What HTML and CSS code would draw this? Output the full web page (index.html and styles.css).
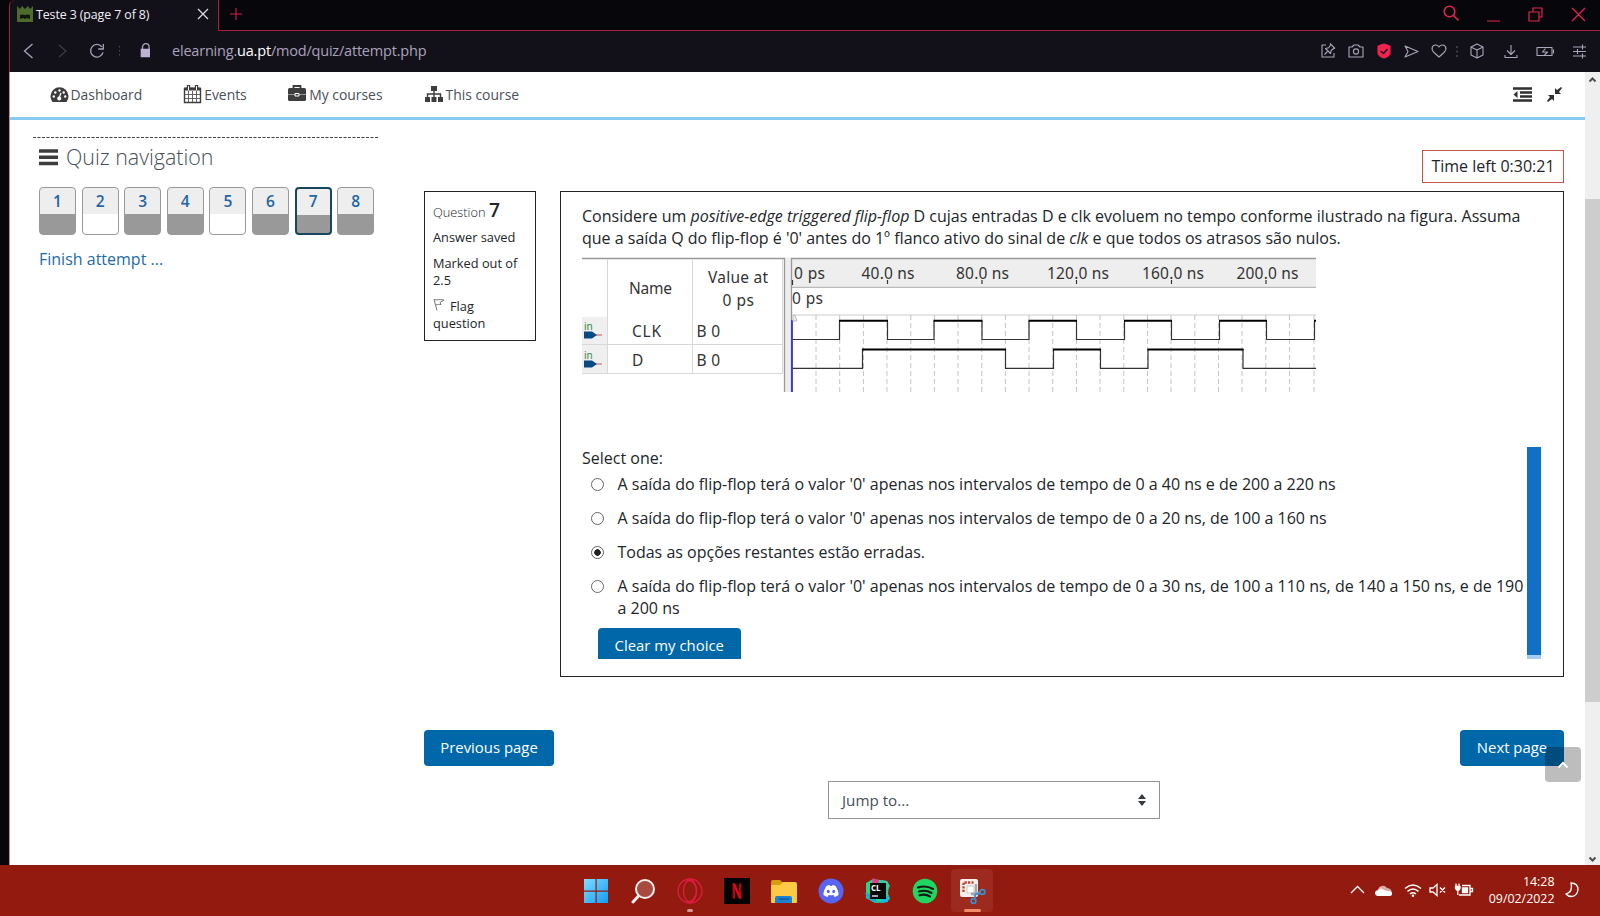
FILE: index.html
```html
<!DOCTYPE html>
<html lang="en">
<head>
<meta charset="utf-8">
<title>Teste 3 (page 7 of 8)</title>
<link rel="stylesheet" href="styles.css">
</head>
<body>
<div class="browser">
  <div class="tabstrip">
    <div class="tab">
      <svg class="favicon" width="18" height="18" viewBox="0 0 18 18"><path d="M1 1l3 3 2-3 3 3 3-3 2 3 3-3v16H1z" fill="#4c6b2c"/><path d="M4 10q2-1 5 0 3-1 5 0v4l-3-1-2 1-2-1-3 1z" fill="#11150c"/></svg>
      <span class="tab-title">Teste 3 (page 7 of 8)</span>
      <svg class="tab-close" width="12" height="12" viewBox="0 0 12 12"><path d="M1 1l10 10M11 1L1 11" stroke="#e0dde6" stroke-width="1.2"/></svg>
    </div>
    <div class="strip-rest">
      <svg width="14" height="14" viewBox="0 0 14 14"><path d="M7 1v12M1 7h12" stroke="#d11f47" stroke-width="1.1"/></svg>
      <svg class="win-controls" width="146" height="20" viewBox="0 0 146 20" fill="none" stroke="#e2264f" stroke-width="1.2"><circle cx="7.500" cy="7.500" r="5.3" stroke-width="1.6"/><path d="M11.500 11.500l5 5" stroke-width="1.6"/><path d="M45 17h13M87 8h10v9h-10zM91 8V4h9v9h-3M130 4l13 13M143 4l-13 13"/></svg>
    </div>
  </div>
  <div class="toolbar">
    <svg width="140" height="22" viewBox="0 0 140 22" fill="none" stroke="#aaa3bb" stroke-width="1.3"><path d="M22.500 4l-8 7 8 7"/><path d="M49 5l7 6-7 6" stroke="#3d3948"/><path d="M91.800 6.800a6.300 6.300 0 1 0 1.200 5.500M93.300 4v5h-5" /><path d="M109.500 6v12" stroke="#4b4658" stroke-width="1" stroke-dasharray="1.5 2.5"/><path d="M132.500 10V7a3.300 3.300 0 0 1 6.600 0v3" /><path d="M131.300 9.500h9v7h-9z" fill="#beb2d5" stroke="#beb2d5"/></svg>
    <span class="url">elearning.<b>ua.pt</b>/mod/quiz/attempt.php</span>
    <svg class="tool-icons" width="266" height="20" viewBox="0 0 266 20" fill="none" stroke="#aaa5b8" stroke-width="1.1" stroke-linejoin="round"><path d="M5 4H1v12h12v-4M3.500 13.500l3.500-3.500M4.500 7.500l5 5 .8-3.200 3.200-2.300-3.500-3.500-2.300 3.200zM9 2.500l5 5"/><path d="M28 6h3l2-2h4l2 2h3v10H28z"/><circle cx="35" cy="10.500" r="2.600"/><path d="M63 3l6 2v7c0 2-3 4-6 5-3-1-6-3-6-5V5z" fill="#f5234f" stroke="#f5234f"/><path d="M59.500 10l3 2.500 4-4.500" stroke="#191522" stroke-width="1.500"/><path d="M84 5l13 5.500-13 5.500 3-5.500z"/><path d="M118 16l-5-4.500c-4-4-1-8 2-7.500 2 .3 3 2 3 2s1-1.700 3-2c3-.5 6 3.500 2 7.500z"/><path d="M136 5v12" stroke-dasharray="2 2.500" stroke="#625c72"/><path d="M150 6l6-3 6 3v8l-6 3-6-3zM150 6l6 3 6-3M156 9v8"/><path d="M190 4v9M186 9.500l4 4 4-4M184 14v2.500h12V14"/><path d="M216 6.500h15v8h-15zM232.500 8.500v4M224.500 7.500l-3 3.500h5l-3 3"/><path d="M252 6h13M252 10.500h13M252 15h13M261.500 3.500v5M256.500 8v5M261.500 12.500v5"/></svg>
  </div>
  <div class="viewport">
    <div class="page">
      <div class="navbar">
        <div class="nav-item n1"><svg width="19" height="17" viewBox="0 0 19 17"><path d="M2.500 16a9 9 0 1 1 14 0z" fill="#3d3d3d"/><g fill="#fff"><circle cx="3.800" cy="10.500" r="1.200"/><circle cx="5.300" cy="6.500" r="1.200"/><circle cx="9.500" cy="4.500" r="1.200"/><circle cx="13.700" cy="6.500" r="1.200"/><circle cx="15.200" cy="10.500" r="1.200"/></g><path d="M9 12l2-5" stroke="#fff" stroke-width="1.300"/><circle cx="9.200" cy="12.500" r="2" fill="#fff"/></svg>Dashboard</div>
        <div class="nav-item n2"><svg width="19" height="20" viewBox="0 0 19 20"><path d="M1.500 4.500h16v14h-16z" fill="#fff" stroke="#3d3d3d" stroke-width="1.400"/><path d="M1.500 5h16" stroke="#3d3d3d" stroke-width="3"/><path d="M5.500 7v11M9.500 7v11M13.500 7v11M2 10.500h15M2 14.500h15" stroke="#555" stroke-width=".9"/><path d="M5.500 1v5M13.500 1v5" stroke="#3d3d3d" stroke-width="3.400"/><path d="M5.500 2v4M13.500 2v4" stroke="#fff"/></svg>Events</div>
        <div class="nav-item n3"><svg width="20" height="20" viewBox="0 0 20 20"><path d="M6.500 5V2h7v3" fill="none" stroke="#3d3d3d" stroke-width="1.800"/><rect x="1" y="4" width="18" height="13" rx="1.500" fill="#3d3d3d"/><path d="M1 10.500h18" stroke="#bbb" stroke-width=".7"/><path d="M8 9.500h4v2.500H8z" fill="#3d3d3d" stroke="#fff"/></svg>My courses</div>
        <div class="nav-item n4"><svg width="20" height="17" viewBox="0 0 20 17" fill="#3d3d3d"><path d="M7 0h6v5H7zM1 11h5v5H1zM7.500 11h5v5h-5zM14 11h5v5h-5z"/><path d="M10 5v6M3.500 11V8h13v3" fill="none" stroke="#3d3d3d" stroke-width="1.400"/></svg>This course</div>
        <svg class="nav-tools" width="50" height="18" viewBox="0 0 50 18" fill="#2f2f2f"><path d="M0 1.200h19v2.500H0zM7 5.200h12v2.500H7zM7 9.200h12v2.500H7zM0 13.200h19v2.500H0zM4.500 5v7L.5 8.500z"/><path d="M42 8V2l2 2 4-3 1 1-3 4 2 2zM41 9v6l-2-2-4 3-1-1 3-4-2-2z"/></svg>
      </div>
      <div class="columns">
        <aside class="side">
          <svg class="dash" width="346" height="2"><path d="M0 1.500h346" stroke="#444" stroke-dasharray="3 1.500"/></svg>
          <h2 class="side-title"><svg width="19" height="17" viewBox="0 0 19 17"><path d="M0 2h19M0 8.300h19M0 14.600h19" stroke="#3d3d3d" stroke-width="3.500"/></svg>Quiz navigation</h2>
          <div class="qnav">
            <a class="q done">1</a><a class="q">2</a><a class="q done">3</a><a class="q done">4</a><a class="q">5</a><a class="q done">6</a><a class="q done current">7</a><a class="q done">8</a>
          </div>
          <a class="finish">Finish attempt ...</a>
        </aside>
        <main class="main">
          <div class="timer">Time left 0:30:21</div>
          <div class="question">
            <div class="info">
              <div class="qno">Question <b>7</b></div>
              <div class="state">Answer saved</div>
              <div class="grade">Marked out of 2.5</div>
              <div class="flag"><svg width="12" height="13" viewBox="0 0 12 13" fill="none" stroke="#777"><path d="M1 1.500l3 11M1 1.500c3 1 5-.5 10 .5L7 4.500l1 2c-2 0-3-.5-5 .5"/></svg>Flag question</div>
            </div>
            <div class="content">
              <p class="stem">Considere um <i>positive-edge triggered flip-flop</i> D cujas entradas D e clk evoluem no tempo conforme ilustrado na figura. Assuma<br>que a saída Q do flip-flop é '0' antes do 1º flanco ativo do sinal de <i>clk</i> e que todos os atrasos são nulos.</p>
              <svg class="wave" width="734" height="135" viewBox="581 257 734 135">
                <path d="M581 317h25v56.500h-25z" fill="#efefef"/>
                <path d="M783 257.500h8V392h-8z" fill="#ededf0"/>
                <path d="M791 259h524v28H791z" fill="#eee"/>
                <path d="M581 258.500h203M790 258.500h525" stroke="#999" stroke-width="1.500"/>
                <path d="M606.500 259v114M691.500 259v114M781.500 259v114M581 344.500h201M581 373.500h201" stroke="#d8d8d8" fill="none"/>
                <path d="M783.500 258v134M790.500 258v134" stroke="#999" stroke-width="1.300"/>
                <path d="M791 287.300h524" stroke="#aaa"/><path d="M791 315h524" stroke="#ccc"/>
                <path class="grid" d="M815 315v77M838.700 315v77M862.400 315v77M886 315v77M909.800 315v77M933.400 315v77M957 315v77M980.800 315v77M1004.400 315v77M1028 315v77M1051.800 315v77M1075.500 315v77M1099 315v77M1122.800 315v77M1146.500 315v77M1170 315v77M1193.800 315v77M1217.500 315v77M1241 315v77M1264.800 315v77M1288.500 315v77M1313 315v77"/>
                <path d="M791.500 280v5M886.500 280v4M981 280v4M1075.500 280v4M1170.500 280v4M1265 280v4" stroke="#333" stroke-width="1.200"/>
                <path d="M791 339.500h47.500V321M886.500 321v18.500h46.500V321M981 321v18.500h47V321M1075.500 321v18.500h48V321M1170.500 321v18.500h48V321M1265.500 321v18.500h48V321M791 368.300h70.500V349M1004.500 349v19.300h48V349M1099.500 349v19.300h47.500V349M1242 349v19.300h73" stroke="#333" stroke-width="1.200" fill="none"/>
                <path d="M838 320.800h49M932.500 320.800h49M1027.500 320.800h48.500M1123 320.800h48M1218 320.800h48M1313 320.800h2M861 349.500h144M1052 349.500h48M1146.500 349.500h96" stroke="#000" stroke-width="2"/>
                <path d="M791 320v72" stroke="#3636c4" stroke-width="1.800"/><path d="M792 315h2l2 6h-4z" stroke="#bbb" fill="#eee"/>
                <g class="port"><path d="M583 331.500h8l5 3.500-5 3.500h-8zM583 360.500h8l5 3.500-5 3.500h-8z" fill="#074b85"/><path d="M595 335h6M595 364h6" stroke="#c55"/><text x="583" y="330">in</text><text x="583" y="359">in</text></g>
                <g class="lbl"><text x="628" y="294" textLength="43">Name</text><text x="707" y="283" textLength="60">Value at</text><text x="721.500" y="305.500" textLength="31.500">0 ps</text><text x="631" y="337" textLength="29">CLK</text><text x="631" y="366">D</text><text x="695.500" y="337" textLength="23.500">B 0</text><text x="695.500" y="366" textLength="23.500">B 0</text>
                <text x="793" y="279.300" textLength="31">0 ps</text><text x="860.500" y="279.300" textLength="53">40.0 ns</text><text x="955" y="279.300" textLength="53">80.0 ns</text><text x="1046" y="279.300" textLength="62">120.0 ns</text><text x="1141" y="279.300" textLength="62">160.0 ns</text><text x="1235.500" y="279.300" textLength="62">200.0 ns</text><text x="791" y="303.500" textLength="31">0 ps</text></g>
              </svg>
              <div class="answers">
                <div class="choices">
                  <div class="prompt">Select one:</div>
                  <div class="opt"><span class="radio"></span><span>A saída do flip-flop terá o valor '0' apenas nos intervalos de tempo de 0 a 40 ns e de 200 a 220 ns</span></div>
                  <div class="opt"><span class="radio"></span><span>A saída do flip-flop terá o valor '0' apenas nos intervalos de tempo de 0 a 20 ns, de 100 a 160 ns</span></div>
                  <div class="opt"><span class="radio on"></span><span>Todas as opções restantes estão erradas.</span></div>
                  <div class="opt"><span class="radio"></span><span>A saída do flip-flop terá o valor '0' apenas nos intervalos de tempo de 0 a 30 ns, de 100 a 110 ns, de 140 a 150 ns, e de 190<br>a 200 ns</span></div>
                  <div class="clear">Clear my choice</div>
                </div>
                <div class="bluebar"></div>
              </div>
            </div>
          </div>
          <div class="pager"><a class="btn">Previous page</a><a class="btn next">Next page</a></div>
          <div class="jump"><span>Jump to...</span><svg width="8" height="12" viewBox="0 0 8 12"><path d="M4 0l4 5H0zM4 12L0 7h8z" fill="#343a40"/></svg></div>
        </main>
      </div>
      <div class="totop"><svg width="12" height="8" viewBox="0 0 12 8"><path d="M1.500 6.500L6 2l4.500 4.500" fill="none" stroke="#fff" stroke-width="2"/></svg></div>
    </div>
    <div class="scrollbar">
      <svg width="7" height="6" viewBox="0 0 7 6"><path d="M.5 4.500l3-3 3 3" fill="none" stroke="#505050" stroke-width="2"/></svg>
      <div class="thumb"></div>
      <svg width="7" height="6" viewBox="0 0 7 6"><path d="M.5 1.500l3 3 3-3" fill="none" stroke="#505050" stroke-width="2"/></svg>
    </div>
  </div>
</div>
<div class="taskbar">
  <div class="apps">
    <div class="app"><svg width="26" height="26" viewBox="0 0 26 26"><defs><linearGradient id="w" x1="0" y1="0" x2="1" y2="1"><stop offset="0" stop-color="#7fdcff"/><stop offset="1" stop-color="#129cf5"/></linearGradient></defs><path d="M1 1h11.500v11.500H1zM13.700 1H25v11.500H13.700zM1 13.700h11.500V25H1zM13.700 13.700H25V25H13.700z" fill="url(#w)"/></svg></div>
    <div class="app"><svg width="26" height="26" viewBox="0 0 26 26"><circle cx="15" cy="11" r="9" fill="#a94a41" stroke="#f5eeee" stroke-width="2"/><path d="M8.500 18L3 24" stroke="#eee" stroke-width="3" stroke-linecap="round"/></svg></div>
    <div class="app"><svg width="26" height="26" viewBox="0 0 26 26" fill="none" stroke="#e01c40" stroke-width="1.300"><circle cx="13" cy="13" r="12"/><ellipse cx="13" cy="13" rx="6.500" ry="11"/><path d="M10 3c5-2 9.500 4 9.500 10s-4.500 12-9.500 10"/></svg><i class="dot"></i></div>
    <div class="app"><svg width="26" height="26" viewBox="0 0 26 26"><path d="M0 0h26v26H0z" fill="#050203"/><path d="M9.800 5.500v15M16.200 5.500v15" stroke="#b1060f" stroke-width="2.400"/><path d="M8.600 5.500h2.600l6.200 15h-2.600z" fill="#e50914"/></svg></div>
    <div class="app"><svg width="28" height="26" viewBox="0 0 28 26"><path d="M1 4q0-2 2-2h7l3 3h11v8H1z" fill="#d99a14"/><path d="M1 7h9l3-3h12q2 0 2 2v18q0 1-1 1H2q-1 0-1-1z" fill="#fdca43"/><path d="M5 25v-5q0-2 2-2h13q2 0 2 2v5z" fill="#1e82d2"/><path d="M9 21h10" stroke="#115b9b" stroke-width="1.500"/></svg></div>
    <div class="app"><svg width="26" height="26" viewBox="0 0 26 26"><circle cx="13" cy="13" r="12.500" fill="#5865f2"/><path d="M8.500 8q2-1 3-1l.6 1h1.800l.6-1q1 0 3 1 3.300 5 3 9-2 1.500-4 2l-1-2q-2.500.6-5 0l-1 2q-2-.5-4-2-.3-4 3-9z" fill="#fff"/><ellipse cx="10.300" cy="13.500" rx="1.500" ry="1.700" fill="#5865f2"/><ellipse cx="15.700" cy="13.500" rx="1.500" ry="1.700" fill="#5865f2"/></svg></div>
    <div class="app"><svg width="28" height="28" viewBox="0 0 28 28"><path d="M2 6l7-4 14 2 2 4-2 17-12 1-9-5z" fill="#21d789"/><path d="M9 1l7 3-3 5-5-2z" fill="#ed358c"/><path d="M15 3l8 1 3 5-3 5 3 8-7 4-6-7z" fill="#35cf9c"/><path d="M1 16l8 2 5 8-10-4z" fill="#13a9dd"/><path d="M18 20l7-1-1 6-8 1z" fill="#13b9e0"/><path d="M6 6h16v16H6z" fill="#090909"/><text x="7" y="14" class="clion">CL</text><path d="M8 19h6" stroke="#fff" stroke-width="1.300"/></svg></div>
    <div class="app"><svg width="26" height="26" viewBox="0 0 26 26"><circle cx="13" cy="13" r="12.300" fill="#1ed760"/><path d="M6 9.500q8-2.500 15 1.500M7 13.500q7-2 12.500 1.500M7.500 17.200q6-1.500 10.500 1.300" fill="none" stroke="#161616" stroke-width="2.100" stroke-linecap="round"/></svg></div>
    <div class="app active"><svg width="28" height="28" viewBox="0 0 28 28"><rect x="2" y="2" width="18" height="18" rx="2" fill="#f5eeec"/><path d="M5.500 15V5.500h10" fill="none" stroke="#b5492f" stroke-width="2.300" stroke-dasharray="2.300 1.200"/><path d="M9 9h7v7H9z" fill="#fff" stroke="#c9c9cb"/><path d="M18 7v9l-2 3M13 17l9-1" stroke="#a0a6af" stroke-width="2.300" fill="none"/><circle cx="24.500" cy="15" r="2.400" fill="none" stroke="#3a8fd0" stroke-width="1.600"/><circle cx="15.500" cy="24" r="2.400" fill="none" stroke="#3a8fd0" stroke-width="1.600"/><path d="M16.500 22l1-4.500 5-1.500" fill="none" stroke="#3a8fd0" stroke-width="1.600"/></svg><i class="dot wide"></i></div>
  </div>
  <div class="tray">
    <svg width="126" height="20" viewBox="0 0 126 20" fill="none" stroke="#fff" stroke-width="1.300"><path d="M1 13l6.500-6.500L14 13"/><path d="M28 10a5 5 0 0 1 9-2q5 0 5 6l-14-4z" fill="#dfaaa5" stroke="none"/><path d="M28 16q-3-.5-3-3t3-3q1.500-2 4-1l5 2q5-.5 5 3 0 2-2 2z" fill="#fff" stroke="none"/><path d="M55 8.500q8-7 16 0M57.500 11.300q5.500-4.600 11 0M60 14q3-2.500 6 0" stroke-width="1.500"/><circle cx="63" cy="15.800" r="1.300" fill="#fff" stroke="none"/><path d="M80 8h3l4-3.500v11L83 12h-3zM90 7.500l5 5M95 7.500l-5 5"/><path d="M112 5.500h8v9.500h-11M120.500 8.500h2v3h-2"/><path d="M112.500 8h5v4.500h-5z" fill="#fff"/><path d="M106 3.500v3M109 3.500v3M105.500 6.500h4.500v2l-1.200 1.500h-2l-1.300-1.500zM107.800 10v5" fill="#fff"/></svg>
    <div class="clock">14:28<br>09/02/2022</div>
    <svg width="14" height="16" viewBox="0 0 14 16"><path d="M6 1q7 0 7 7-1 6-6.500 6.500Q3 14.500 1 12q7-2 5-11z" fill="none" stroke="#fff" stroke-width="1.300"/></svg>
  </div>
</div>
</body>
</html>
```
FILE: styles.css
```css
* { box-sizing: border-box; }
body { margin: 0; width: 1600px; height: 916px; overflow: hidden; background: #07070b; font-family: "Open Sans", "Noto Sans", sans-serif; font-size: 16px; color: #212529; display: flex; flex-direction: column; }
svg { display: block; flex: none; }
.browser { height: 865px; padding-left: 9px; display: flex; flex-direction: column; background: #07070b; }
.tabstrip { height: 31px; display: flex; flex: none; }
.tab { width: 210px; background: #12111a; border-left: 1px solid #a71f3e; border-right: 1px solid #a71f3e; border-top-left-radius: 6px; display: flex; align-items: center; padding: 0 9px 3px 6px; }
.tab-title { font-size: 12.400px; letter-spacing: -.1px; color: #f2eff7; margin-left: 2px; flex: 1; white-space: nowrap; }
.strip-rest { flex: 1; border-bottom: 1px solid #a71f3e; display: flex; align-items: center; padding: 0 12px 3px 10px; justify-content: space-between; }
.toolbar { height: 41px; flex: none; background: #12111a; border-left: 1px solid #a71f3e; display: flex; align-items: center; padding-bottom: 2px; }
.url { margin-left: 22px; font-size: 14.500px; color: #aaa3bb; flex: 1; letter-spacing: -.2px; }
.url b { font-weight: 400; color: #fff; }
.tool-icons { margin-right: 13.500px; }
.viewport { flex: 1; min-height: 0; display: flex; }
.page { flex: 1; background: #fff; border-left: 1px solid #d8859a; position: relative; display: flex; flex-direction: column; }
.navbar { height: 48px; flex: none; border-bottom: 3px solid #86caf4; display: flex; align-items: center; padding-left: 39.500px; font-size: 13.900px; color: #495057; }
.nav-item { display: flex; align-items: center; height: 44px; padding-bottom: 1px; }
.nav-item svg { margin-right: 2px; }
.n2 { margin-left: 41px; } .n3 { margin-left: 40.500px; } .n4 { margin-left: 41px; }
.nav-tools { margin-left: auto; margin-right: 22px; }
.columns { display: flex; padding-left: 23px; flex: 1; }
.side { width: 391px; padding-top: 16px; flex: none; }
.side-title { margin: 3px 0 0 5.500px; font-size: 21.400px; line-height: 32px; font-weight: 300; color: #495057; display: flex; align-items: center; gap: 8.500px; }
.qnav { display: flex; gap: 5.600px; margin: 14px 0 0 6px; }
.q { width: 37px; height: 48px; border: 1px solid #999; border-radius: 4px; text-align: center; font-weight: 600; font-size: 15.500px; line-height: 26px; color: #1f65a3; background: linear-gradient(#eee 26px, #fff 26px); }
.q.done { background: linear-gradient(#eee 26px, #999 26px); }
.q.current { border: 2px solid #17475f; line-height: 24px; }
.finish { display: block; margin: 13px 0 0 6px; line-height: 22px; color: #1e6ba8; }
.main { width: 1140px; padding-top: 30px; display: flex; flex-direction: column; }
.timer { align-self: flex-end; width: 142px; height: 33px; border: 1px solid #c9544e; line-height: 31px; text-align: center; }
.question { margin-top: 8px; display: flex; justify-content: space-between; align-items: flex-start; }
.info { width: 112px; height: 150px; border: 1px solid #222; padding: 5px 8px; font-size: 12.800px; line-height: 17px; }
.qno { font-weight: 300; line-height: 26px; }
.qno b { font-size: 19.200px; font-weight: 600; }
.state { margin-top: 4px; } .grade { margin-top: 9px; } .flag { margin-top: 9px; }
.flag svg { display: inline-block; margin-right: 5px; }
.content { width: 1004px; height: 486px; border: 1px solid #222; padding: 13px 21px 0 21px; line-height: 22px; }
.stem { margin: 0; white-space: nowrap; }
.wave { margin-top: 8px; }
.wave text { font-family: "Noto Sans", sans-serif; }
.lbl { font-size: 15.500px; fill: #333; }
.port { font-size: 10px; fill: #348a42; }
.grid { stroke: #c4c4c4; stroke-dasharray: 5 3; }
.answers { margin-top: 54px; height: 213px; display: flex; overflow: hidden; position: relative; }
.choices { width: 945px; white-space: nowrap; padding-top: 1px; }
.prompt { line-height: 22px; }
.opt { display: flex; align-items: flex-start; gap: 13.500px; padding-left: 9px; margin-bottom: 12px; }
.prompt + .opt { margin-top: 4px; }
.radio { width: 13px; height: 13px; margin-top: 4.500px; border: 1px solid #666; border-radius: 50%; flex: none; }
.radio.on { background: radial-gradient(circle, #222 0 3px, #fff 3.500px); }
.clear { margin: -3px 0 0 16px; width: 142.500px; height: 36px; background: #0067a9; color: #fff; border-radius: 4px; line-height: 34px; text-align: center; font-size: 14.900px; }
.bluebar { width: 14px; margin-top: 1px; background: #126fc6; border-bottom: 4px solid #a5cdf3; flex: none; }
.pager { display: flex; justify-content: space-between; margin-top: 53px; }
.btn { width: 130px; height: 36px; border-radius: 4px; background: #0067a9; color: #fff; line-height: 35px; text-align: center; font-size: 14.900px; }
.btn.next { width: 104px; }
.jump { margin: 15px 0 0 404px; width: 332px; height: 38px; border: 1px solid #8f959b; padding: 0 13px 0 13px; display: flex; justify-content: space-between; align-items: center; color: #495057; font-size: 15.200px; }
.jump span { padding-bottom: 1px; }
.totop { position: absolute; right: 4px; bottom: 83px; width: 36px; height: 35px; border-radius: 4px; background: rgba(0,0,0,.26); display: flex; align-items: center; justify-content: center; }
.scrollbar { width: 15px; background: #efefef; display: flex; flex-direction: column; align-items: center; justify-content: space-between; padding: 5px 0 3px; }
.thumb { width: 15px; height: 503px; background: #cdcdcd; margin-bottom: 38px; }
.taskbar { height: 51px; background: #921a0e; position: relative; display: flex; }
.apps { display: flex; padding-left: 575px; gap: 4.950px; align-items: center; }
.app { width: 42px; height: 43px; display: flex; align-items: center; justify-content: center; position: relative; border-radius: 4px; }
.app.active { background: #9c2a1e; }
.dot { position: absolute; bottom: 0; left: 18px; width: 6px; height: 3px; border-radius: 2px; background: #d59a95; }
.dot.wide { left: 13px; width: 17px; background: #f38c6c; }
.clion { font: bold 8px "Open Sans", sans-serif; fill: #fff; }
.tray { margin-left: auto; display: flex; align-items: center; padding-right: 21px; padding-bottom: 2px; color: #fff; }
.clock { width: 79px; text-align: right; font: 12.400px/17px "Open Sans", sans-serif; margin-right: 10.500px; }
```
